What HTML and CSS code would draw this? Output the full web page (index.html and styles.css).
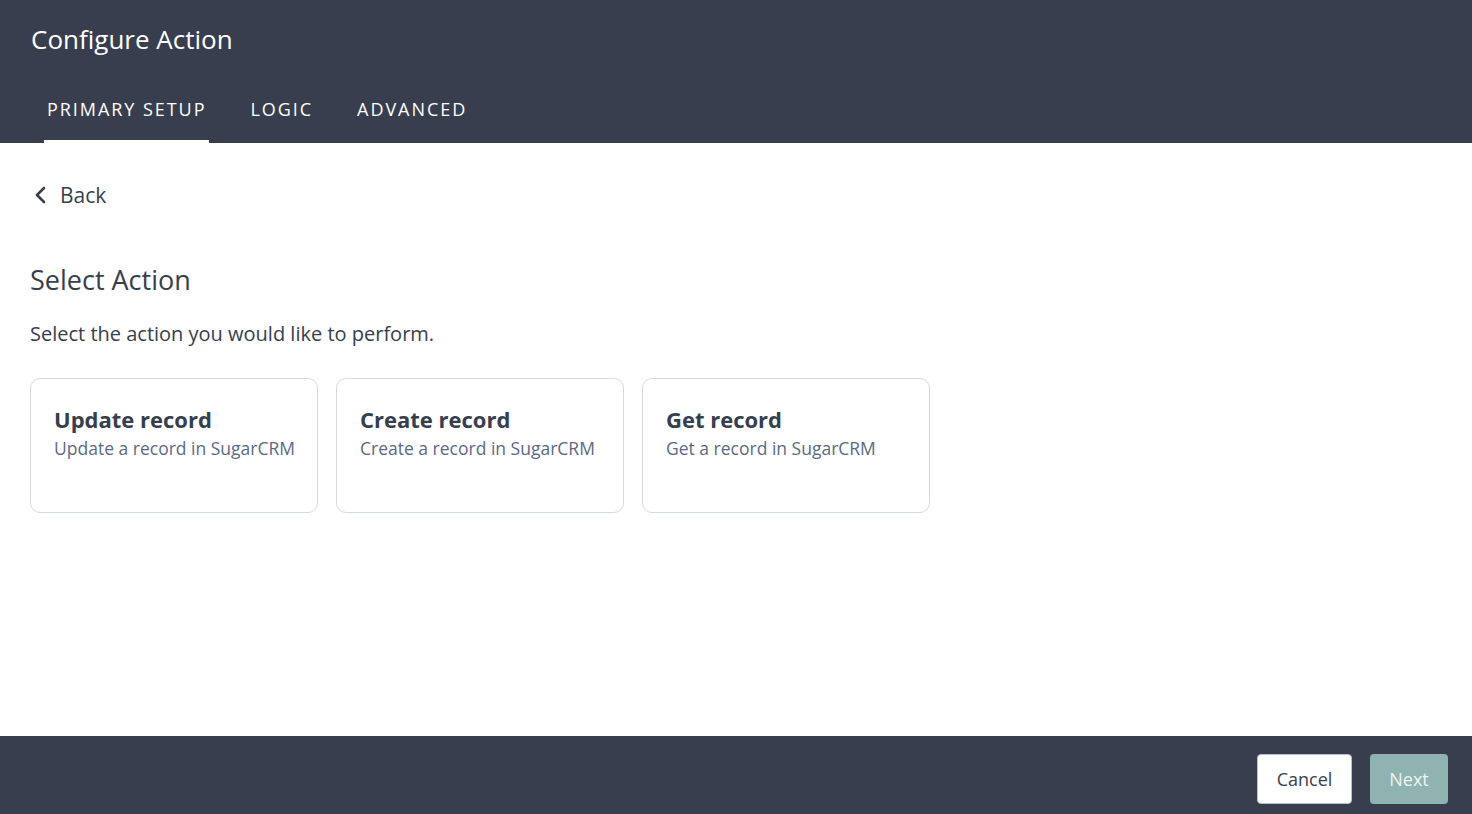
FILE: index.html
```html
<!DOCTYPE html>
<html>

<head>
    <link rel="stylesheet" href="styles.css">
</head>

<body>

    <div class="header">
        <h1>Configure Action</h1>
        <div class="tabs">
            <div class="tab active">PRIMARY SETUP</div>
            <div class="tab">LOGIC</div>
            <div class="tab">ADVANCED</div>
        </div>
    </div>

    <div class="content">
        <a class="back" href="#">
            <svg width="14" height="18" viewBox="0 0 14 18">
                <path d="M10 2 L3 9 L10 16" fill="none" stroke="#373e4d" stroke-width="2.6" stroke-linecap="round" stroke-linejoin="round" />
            </svg>
            <span>Back</span>
        </a>

        <h2>Select Action</h2>
        <p class="intro">Select the action you would like to perform.</p>

        <div class="cards">
            <div class="card">
                <div class="card-title">Update record</div>
                <div class="card-text">Update a record in SugarCRM</div>
            </div>
            <div class="card">
                <div class="card-title">Create record</div>
                <div class="card-text">Create a record in SugarCRM</div>
            </div>
            <div class="card">
                <div class="card-title">Get record</div>
                <div class="card-text">Get a record in SugarCRM</div>
            </div>
        </div>
    </div>

    <div class="footer">
        <button class="cancel">Cancel</button>
        <button class="next">Next</button>
    </div>

</body>

</html>
```

FILE: styles.css
```css
body {
    margin: 0;
    height: 100vh;
    display: flex;
    flex-direction: column;
    font-family: "Open Sans", "Noto Sans", sans-serif;
    color: #373e4d;
    background: #fff;
}

.header {
    background-color: #383e4e;
    color: #fff;
    padding: 0 31px;
    height: 143px;
    display: flex;
    flex-direction: column;
    box-sizing: border-box;
}

.header h1 {
    margin: 0;
    font-weight: 400;
    font-size: 26px;
    line-height: 30px;
    padding-top: 24px;
}

.tabs {
    display: flex;
    gap: 38px;
    margin-top: auto;
    margin-left: 13px;
}

.tab {
    font-size: 18px;
    letter-spacing: 1.95px;
    font-weight: 500;
    padding: 0 3px;
    height: 58px;
    line-height: 48px;
    box-sizing: border-box;
    border-bottom: 3px solid transparent;
}

.tab.active {
    border-bottom-color: #fff;
}

.content {
    flex: 1;
    padding: 38px 30px 0 30px;
}

.back {
    display: inline-flex;
    align-items: center;
    gap: 12px;
    color: #373e4d;
    text-decoration: none;
    font-size: 21px;
    margin-left: 4px;
}

h2 {
    font-weight: 400;
    font-size: 27px;
    margin: 54px 0 0 0;
    line-height: 34px;
}

.intro {
    font-size: 20px;
    margin: 24px 0 0 0;
    line-height: 26px;
}

.cards {
    display: flex;
    gap: 18px;
    margin-top: 31px;
}

.card {
    width: 288px;
    height: 135px;
    box-sizing: border-box;
    border: 1px solid #d5d9e1;
    border-radius: 10px;
    padding: 25px 10px 25px 23px;
}

.card-title {
    font-size: 22px;
    font-weight: 700;
    line-height: 30px;
}

.card-text {
    font-size: 17.5px;
    color: #5b6984;
    line-height: 26px;
    margin-top: 1px;
    white-space: nowrap;
}

.footer {
    background-color: #383e4e;
    height: 78px;
    box-sizing: border-box;
    display: flex;
    align-items: flex-start;
    justify-content: flex-end;
    gap: 18px;
    padding: 18px 24px 0 24px;
}

.footer button {
    font-family: inherit;
    font-size: 18px;
    height: 50px;
    border-radius: 4px;
    cursor: pointer;
}

.cancel {
    background: #fff;
    color: #373e4d;
    border: 1px solid #b8bfcc;
    width: 95px;
}

.next {
    background: #8eb3b1;
    color: #eef3f3;
    border: none;
    width: 78px;
}
```
